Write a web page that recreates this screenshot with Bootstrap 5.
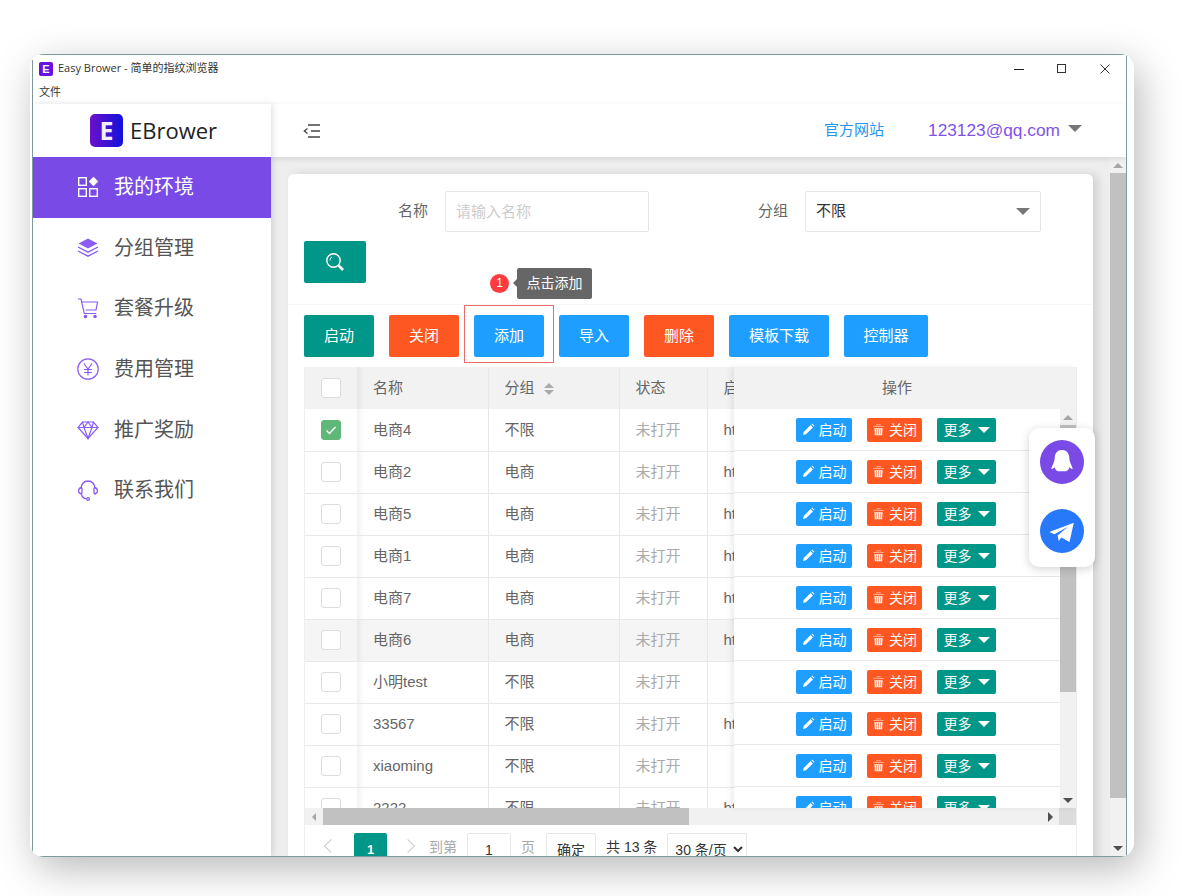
<!DOCTYPE html>
<html lang="zh-CN">
<head>
  <meta charset="UTF-8" />
  <meta name="viewport" content="width=device-width, initial-scale=1.0"/>
  <title>Easy Brower</title>
  <link href="https://cdn.jsdelivr.net/npm/bootstrap@5.3.0/dist/css/bootstrap.min.css" rel="stylesheet"/>
  <style>
    html, body { height: 100%; }
    body {
      background: #fff;
      font-family: "Liberation Sans", "Noto Sans CJK SC", sans-serif;
      font-size: 15px;
      color: #666;
      overflow: hidden;
    }

    .app-frame {
      margin: 54px 0 0 30px;
      width: 1104px;
      height: 803px;
      padding: 0 7px 0 2px;
      background: #fff;
      border-radius: 14px;
      box-shadow: 6px 12px 40px rgba(0, 0, 0, .28);
      overflow: hidden;
    }
    .app-window {
      position: relative;
      height: 100%;
      border: 1px solid #7f999e;
      background: #fff;
      overflow: hidden;
    }

    .title-bar { height: 27px; padding-left: 6px; }
    .title-logo {
      width: 14px; height: 14px; border-radius: 2px;
      background: #6a11e0; color: #fff;
      font-size: 11px; font-weight: 700; line-height: 14px; text-align: center;
    }
    .title-text { margin-left: 5px; font-family: "Open Sans", "Noto Sans CJK SC", sans-serif; font-size: 11px; color: #333; }
    .win-btn { width: 43px; height: 27px; }
    .menu-bar { height: 22px; padding-left: 6px; font-size: 11px; line-height: 21px; color: #333; }

    .app-body { height: 752px; }
    .side-nav { width: 238px; flex: none; background: #fff; box-shadow: 2px 0 6px rgba(0, 0, 0, .12); position: relative; z-index: 3; }
    .brand { height: 53px; padding-left: 57px; }
    .brand-logo {
      width: 33px; height: 33px; border-radius: 5px;
      background: linear-gradient(90deg, #6a11cb, #1212dc);
      color: #f3eefc; font-family: "Open Sans", sans-serif; font-size: 25px; font-weight: 700; line-height: 33px; text-align: center;
    }
    .brand-name { margin-left: 7px; font-family: "Open Sans", sans-serif; font-size: 22px; color: #222; }
    .side-item { height: 60.6px; padding-left: 44px; font-size: 20px; color: #555; }
    .side-item svg { width: 22px; height: 22px; margin-right: 15px; flex: none; color: #8a5cf2; }
    .side-item.is-active { background: #7a4ae6; color: #fff; }
    .side-item.is-active svg { color: #fff; }

    .main-area { width: 855px; flex: none; min-width: 0; }
    .top-bar { height: 53px; background: #fff; box-shadow: 0 2px 6px rgba(0, 0, 0, .1); padding-left: 32px; position: relative; z-index: 2; }
    .site-link { margin-left: 504px; color: #2196f3; font-size: 15px; }
    .user-mail { margin-left: 44px; color: #7f52ea; font-size: 17.3px; }
    .caret-down { display: inline-block; width: 0; height: 0; border-left: 7px solid transparent; border-right: 7px solid transparent; border-top: 7px solid #777; }
    .page-row { height: 699px; background: #eee; }
    .page-scroll { width: 839px; flex: none; padding: 17px 17px 0; overflow: hidden; }
    .main-card { width: 805px; height: 800px; background: #fff; border-radius: 6px 6px 0 0; box-shadow: 5px 0 10px rgba(0, 0, 0, .12); }

    .scroll-y { width: 16px; flex: none; background: #f1f1f1; }
    .page-scroll-bar { padding-top: 0; }
    .arrow-up, .arrow-down, .arrow-left, .arrow-right { width: 0; height: 0; display: block; }
    .arrow-up { border-left: 5px solid transparent; border-right: 5px solid transparent; border-bottom: 5px solid #a6a6a6; }
    .arrow-down { border-left: 5px solid transparent; border-right: 5px solid transparent; border-top: 5px solid #505050; }
    .arrow-left { border-top: 4px solid transparent; border-bottom: 4px solid transparent; border-right: 4px solid #a6a6a6; }
    .arrow-right { border-top: 5px solid transparent; border-bottom: 5px solid transparent; border-left: 5px solid #505050; }
    .scroll-btn { height: 16px; }
    .scroll-thumb { background: #c1c1c1; }

    .search-form { padding: 17px 16px 0; height: 131px; border-bottom: 1px solid #f6f6f6; }
    .field-label { text-align: right; margin-right: 17px; color: #666; }
    .field-input.form-control {
      height: 41px; border: 1px solid #e6e6e6; border-radius: 2px; padding: 0 10px;
      font-size: 15px; color: #333; box-shadow: none; background: #fff;
    }
    .field-input.form-control::placeholder { color: #ccc; }
    .btn-search { margin-top: 9px; width: 62px; height: 42px; padding: 0; display: flex; align-items: center; justify-content: center; }
    .btn.tone-teal { background: #009688; color: #fff; border: 0; border-radius: 2px; }
    .btn.tone-red { background: #ff5722; color: #fff; border: 0; border-radius: 2px; }
    .btn.tone-blue { background: #1e9fff; color: #fff; border: 0; border-radius: 2px; }

    .tool-row { padding: 10px 16px; gap: 15px; height: 62px; }
    .tool-btn { height: 42px; padding: 0; font-size: 15px; line-height: 42px; width: 70px; }
    .tool-btn.is-wide { width: 100px; }
    .tool-btn.is-mid { width: 84px; }
    .guide-wrap { position: relative; height: 42px; }
    .guide-box { position: absolute; left: -10px; right: -10px; top: -10px; bottom: -6px; border: 1px solid #ef6a6a; pointer-events: none; }
    .guide-dot {
      position: absolute; left: 16px; top: -41px; width: 19px; height: 19px; border-radius: 50%;
      background: #ff3b3f; color: #fff; font-size: 12px; line-height: 19px; text-align: center;
    }
    .guide-tip {
      position: absolute; left: 43px; top: -47px; width: 75px; height: 31px; border-radius: 2px;
      background: #666; color: #fff; font-size: 14px; line-height: 31px; text-align: center; white-space: nowrap;
    }
    .guide-tip::before {
      content: ""; position: absolute; left: -4px; top: 11px;
      border-top: 4px solid transparent; border-bottom: 4px solid transparent; border-right: 4px solid #666;
    }

    .grid-box { margin: 0 16px; width: 773px; border-left: 1px solid #eee; border-right: 1px solid #eee; }
    .grid-main { height: 441px; }
    .grid-left { width: 429px; flex: none; overflow: hidden; }
    .env-table.table { width: 600px; table-layout: fixed; margin: 0; border-color: #e6e6e6; color: #666; font-size: 15px; }
    .env-table.table > :not(caption) > * > * { height: 42px; padding: 0 16px; vertical-align: middle; white-space: nowrap; border-bottom: 1px solid #e8e8e8; border-right: 1px solid #e8e8e8; }
    .env-table.table > thead > tr > th { background: #f2f2f2; font-weight: 400; border-bottom: 0; border-right-color: #e8e8e8; }
    .env-table.table > :not(caption) > * > *:first-child { padding: 0 0 0 16px; background: #fff; border-right: 0; }
    .env-table.table > thead > tr > th:first-child { background: #f2f2f2; }
    .env-table.table > :not(caption) > * > *:nth-child(2) { background-image: linear-gradient(90deg, rgba(0, 0, 0, .05), rgba(0, 0, 0, 0) 7px); }
    .env-table .is-hover > td, .env-table.table > tbody > .is-hover > td:first-child, .ops-table .is-hover { background: #f5f5f5; }
    .state-off { color: #aaa; }
    .check-box { display: block; width: 20px; height: 20px; border: 1px solid #ddd; border-radius: 3px; background: #fff; }
    .check-box.is-on { background: #5fb878; border-color: #5fb878; }
    .check-box svg { display: block; width: 18px; height: 18px; }
    .sort-mark { display: inline-block; margin-left: 9px; vertical-align: middle; }
    .sort-mark i { display: block; width: 0; height: 0; border-left: 5px solid transparent; border-right: 5px solid transparent; }
    .sort-mark i:first-child { border-bottom: 5px solid #aaa; margin-bottom: 2px; }
    .sort-mark i:last-child { border-top: 5px solid #aaa; }

    .grid-right { width: 342px; flex: none; background: #fff; box-shadow: -3px 0 6px rgba(0, 0, 0, .07); position: relative; }
    .ops-head { height: 42px; padding-right: 16px; background: #f2f2f2; line-height: 42px; text-align: center; }
    .ops-body { height: 399px; }
    .ops-col { width: 326px; flex: none; overflow: hidden; }
    .ops-table { height: 42px; border-bottom: 1px solid #e8e8e8; padding-left: 62px; gap: 15px; }
    .op-btn { height: 24px; padding: 0; font-size: 14px; line-height: 24px; display: flex; align-items: center; justify-content: center; gap: 4px; }
    .op-btn svg { width: 13px; height: 13px; flex: none; }
    .op-start { width: 56px; }
    .op-stop { width: 55px; }
    .op-more { width: 59px; gap: 6px; }
    .op-more .caret-down { border-left-width: 6px; border-right-width: 6px; border-top-width: 6px; border-top-color: #fff; }
    .grid-scroll-y { width: 16px; background: #f1f1f1; }

    .scroll-x { height: 17px; background: #f1f1f1; }
    .scroll-x-btn { width: 17px; }
    .scroll-x-thumb { width: 366px; margin-left: 1px; background: #c1c1c1; }
    .scroll-corner { width: 17px; background: #dcdcdc; }

    .pager-row { height: 40px; padding: 8px 0 0 17px; font-size: 14px; color: #333; }
    .page-arrow { width: 10px; height: 10px; border-left: 1px solid #ccc; border-bottom: 1px solid #ccc; transform: rotate(45deg); }
    .page-arrow.is-next { transform: rotate(225deg); }
    .page-now { width: 33px; height: 33px; margin: 0 16px 0 18px; background: #009688; color: #fff; text-align: center; line-height: 33px; border-radius: 2px 2px 0 0; font-weight: 700; font-size: 13px; }
    .page-hint { color: #aaa; }
    .page-input { width: 44px; height: 33px; margin: 0 10px; border: 1px solid #e6e6e6; border-radius: 2px; background: #fff; text-align: center; line-height: 33px; color: #333; }
    .page-ok { width: 50px; height: 33px; margin: 0 10px 0 11px; border: 1px solid #e6e6e6; border-radius: 2px; text-align: center; line-height: 33px; }
    .page-size { width: 80px; height: 33px; margin-left: 10px; border: 1px solid #e6e6e6; border-radius: 2px; background: #fff; color: #333; font-size: 14px; padding: 0 0 0 3px; font-family: inherit; }

    .float-panel {
      position: absolute; left: 996px; top: 373px; width: 66px; height: 139px; z-index: 5;
      background: #fff; border-radius: 10px; box-shadow: 0 2px 10px rgba(0, 0, 0, .18);
      padding-top: 12px; gap: 25px;
    }
    .float-icon { width: 44px; height: 44px; display: block; }
  </style>
</head>
<body>

<svg width="0" height="0" class="d-none">
  <symbol id="i-pen" viewBox="0 0 13 13"><path d="M1 12l.7-3L8.6 2.1l2.3 2.3L4 11.3z M9.4 1.3l.8-.8 2.3 2.3-.8.8z" fill="#fff"/></symbol>
  <symbol id="i-bin" viewBox="0 0 13 13"><path d="M1 3h11v1H1z M4.500 1.300h4l1 1.300h-6z M2 5h9l-.7 7.500H2.700z M4.400 6v5.500 M6.500 6v5.500 M8.600 6v5.500" fill="#fff" stroke="#ff5722" stroke-width=".6"/></symbol>
</svg>

<div class="app-frame">
  <div class="app-window">

    <div class="title-bar d-flex align-items-center">
      <div class="title-logo">E</div>
      <div class="title-text">Easy Brower - 简单的指纹浏览器</div>
      <div class="ms-auto d-flex">
        <div class="win-btn d-flex align-items-center justify-content-center"><svg width="10" height="10" viewBox="0 0 10 10"><path d="M0 5.500h10" stroke="#222"/></svg></div>
        <div class="win-btn d-flex align-items-center justify-content-center"><svg width="10" height="10" viewBox="0 0 10 10"><rect x=".5" y=".5" width="8" height="8" fill="none" stroke="#333"/></svg></div>
        <div class="win-btn d-flex align-items-center justify-content-center"><svg width="10" height="10" viewBox="0 0 10 10"><path d="M.5.500l9 9M9.500.500l-9 9" stroke="#333"/></svg></div>
      </div>
    </div>
    <div class="menu-bar">文件</div>

    <div class="app-body d-flex">
      <div class="side-nav">
        <div class="brand d-flex align-items-center">
          <div class="brand-logo">E</div>
          <div class="brand-name">EBrower</div>
        </div>
        <div class="side-item is-active d-flex align-items-center">
          <svg viewBox="0 0 22 22" fill="none" stroke="currentColor" stroke-width="1.400"><rect x="1.700" y="1.700" width="7.600" height="7.600"/><rect x="1.700" y="12.700" width="7.600" height="7.600"/><rect x="12.700" y="12.700" width="7.600" height="7.600"/><path d="M16.500 .8l4.700 4.700-4.700 4.700-4.700-4.700z" fill="currentColor" stroke="none"/></svg>
          我的环境
        </div>
        <div class="side-item d-flex align-items-center">
          <svg viewBox="0 0 22 22" fill="none" stroke="currentColor" stroke-width="1.400"><path d="M11 1.500l9.500 5-9.500 5-9.500-5z" fill="currentColor" stroke="none"/><path d="M1 10l10 5.200L21 10M1 14l10 5.200L21 14"/></svg>
          分组管理
        </div>
        <div class="side-item d-flex align-items-center">
          <svg viewBox="0 0 22 22" fill="none" stroke="currentColor" stroke-width="1.200"><path d="M1 2h3l3.300 14.500h12"/><path d="M5 5h15.500l-1.500 8H8.500"/><circle cx="8.500" cy="19.500" r="1.200" fill="currentColor"/><circle cx="18" cy="19.500" r="1.200" fill="currentColor"/></svg>
          套餐升级
        </div>
        <div class="side-item d-flex align-items-center">
          <svg viewBox="0 0 22 22" fill="none" stroke="currentColor" stroke-width="1.200"><circle cx="11" cy="11" r="10.200"/><path d="M6.800 5.500L11 11l4.200-5.500M11 11v6.500M7 11.500h8M7 14.500h8"/></svg>
          费用管理
        </div>
        <div class="side-item d-flex align-items-center">
          <svg viewBox="0 0 22 22" fill="none" stroke="currentColor" stroke-width="1.200"><path d="M5.500 3h11l4.500 5.500L11 19.500 1 8.500z"/><path d="M1 8.500h20M7 8.500l4 11 4-11M5.500 3L7 8.500 11 3l4 5.500L16.500 3"/></svg>
          推广奖励
        </div>
        <div class="side-item d-flex align-items-center">
          <svg viewBox="0 0 22 22" fill="none" stroke="currentColor" stroke-width="1.300"><path d="M4 9.500C4.500 4.500 7.500 2 11 2s6.500 2.500 7 7.500"/><path d="M4.300 8.500C2.500 9 1.500 10.300 1.500 11.800s1 2.700 2.800 3.200c1 .3 1-6.800 0-6.500zM17.700 8.500c1.800.5 2.800 1.800 2.800 3.300s-1 2.700-2.800 3.200c-1 .3-1-6.800 0-6.500z"/><path d="M4.500 15.500c.5 2.500 2.500 4 5 4.300"/><circle cx="11" cy="20" r="1.300"/></svg>
          联系我们
        </div>
      </div>

      <div class="main-area">
        <div class="top-bar d-flex align-items-center">
          <svg width="17" height="14" viewBox="0 0 17 14" fill="none" stroke="#444" stroke-width="1.600"><path d="M5 1h12M8 7h9M5 13h12"/><path d="M4.500 4.500L1.300 7l3.200 2.500" stroke-width="1.300"/></svg>
          <span class="site-link">官方网站</span>
          <span class="user-mail">123123@qq.com</span>
          <span class="caret-down ms-2 mb-1"></span>
        </div>

        <div class="page-row d-flex">
          <div class="page-scroll">
            <div class="main-card">
              <div class="search-form">
                <div class="d-flex align-items-center">
                  <div class="field-label" style="width:124px">名称</div>
                  <input class="form-control field-input" style="width:204px" placeholder="请输入名称">
                  <div class="field-label" style="width:139px">分组</div>
                  <div class="form-control field-input d-flex align-items-center justify-content-between" style="width:236px">
                    <span>不限</span><span class="caret-down search-caret"></span>
                  </div>
                </div>
                <button class="btn tone-teal btn-search" type="button">
                  <svg width="20" height="20" viewBox="0 0 20 20" fill="none" stroke="#fff"><circle cx="8.500" cy="8.500" r="6.700" stroke-width="1.400"/><path d="M5 8.500c0-2 1-3 2-3.500" stroke-width="1"/><path d="M13.500 13.500l4.500 4.500" stroke-width="2.600"/></svg>
                </button>
              </div>

              <div class="tool-row d-flex">
                <button class="btn tone-teal tool-btn" type="button">启动</button>
                <button class="btn tone-red tool-btn" type="button">关闭</button>
                <div class="guide-wrap">
                  <button class="btn tone-blue tool-btn" type="button">添加</button>
                  <span class="guide-box"></span>
                  <span class="guide-dot">1</span>
                  <span class="guide-tip">点击添加</span>
                </div>
                <button class="btn tone-blue tool-btn" type="button">导入</button>
                <button class="btn tone-red tool-btn" type="button">删除</button>
                <button class="btn tone-blue tool-btn is-wide" type="button">模板下载</button>
                <button class="btn tone-blue tool-btn is-mid" type="button">控制器</button>
              </div>

              <div class="grid-box">
                <div class="grid-main d-flex">
                  <div class="grid-left">
                    <table class="table env-table">
                      <colgroup><col style="width:52px"><col style="width:131px"><col style="width:131px"><col style="width:88px"><col></colgroup>
                      <thead>
                        <tr>
                          <th><span class="check-box"></span></th>
                          <th>名称</th>
                          <th>分组<span class="sort-mark"><i></i><i></i></span></th>
                          <th>状态</th>
                          <th>启动地址</th>
                        </tr>
                      </thead>
                      <tbody id="envRows"></tbody>
                    </table>
                  </div>
                  <div class="grid-right">
                    <div class="ops-head">操作</div>
                    <div class="ops-body d-flex">
                      <div class="ops-col" id="opsRows"></div>
                      <div class="grid-scroll-y d-flex flex-column">
                        <div class="scroll-btn d-flex align-items-center justify-content-center"><span class="arrow-up"></span></div>
                        <div class="scroll-thumb" style="height:267px"></div>
                        <div class="scroll-btn d-flex align-items-center justify-content-center mt-auto"><span class="arrow-down"></span></div>
                      </div>
                    </div>
                  </div>
                </div>

                <div class="scroll-x d-flex">
                  <div class="scroll-x-btn d-flex align-items-center justify-content-center"><span class="arrow-left"></span></div>
                  <div class="scroll-x-thumb"></div>
                  <div class="scroll-x-btn ms-auto d-flex align-items-center justify-content-center"><span class="arrow-right"></span></div>
                  <div class="scroll-corner"></div>
                </div>

                <div class="pager-row d-flex align-items-start">
                  <span class="page-arrow mt-2 ms-1"></span>
                  <span class="page-now">1</span>
                  <span class="page-arrow is-next mt-2"></span>
                  <span class="page-hint ms-3 mt-1">到第</span>
                  <span class="page-input">1</span>
                  <span class="page-hint mt-1">页</span>
                  <span class="page-ok">确定</span>
                  <span class="mt-1">共 13 条</span>
                  <select class="page-size"><option>30 条/页</option></select>
                </div>
              </div>
            </div>
          </div>

          <div class="scroll-y page-scroll-bar d-flex flex-column">
            <div class="scroll-btn d-flex align-items-center justify-content-center"><span class="arrow-up"></span></div>
            <div class="scroll-thumb" style="height:625px"></div>
            <div class="scroll-btn d-flex align-items-center justify-content-center mt-auto"><span class="arrow-down"></span></div>
          </div>
        </div>
      </div>
    </div>

    <div class="float-panel d-flex flex-column align-items-center">
      <svg class="float-icon" viewBox="0 0 44 44">
        <circle cx="22" cy="22" r="22" fill="#7a4ae6"/>
        <path d="M22 10c-4.600 0-7.300 3.500-7.300 8 0 1.500-.3 3-1 4.800-.8 2-2 4.200-2.300 5.600-.1.900 1 .6 2.300-.4l1-.8c.2 1.200.8 2.200 1.500 3l1.800 1h8l1.800-1c.7-.8 1.300-1.800 1.500-3l1 .8c1.300 1 2.400 1.300 2.300.4-.3-1.400-1.500-3.600-2.300-5.600-.7-1.800-1-3.300-1-4.800 0-4.500-2.700-8-7.300-8z" fill="#fff"/>
      </svg>
      <svg class="float-icon" viewBox="0 0 44 44">
        <circle cx="22" cy="22" r="22" fill="#2878fa"/>
        <path d="M9.300 23L33.800 13.700 29.500 33 21.300 28.600 18.700 32 17.600 26.500 28 17.800 14.500 25.300z" fill="#fff"/>
      </svg>
    </div>

  </div>
</div>

<script src="https://cdn.jsdelivr.net/npm/bootstrap@5.3.0/dist/js/bootstrap.bundle.min.js"></script>
<script>
  const rows = [
    ["电商4", "不限", "https://", true],
    ["电商2", "电商", "https://"],
    ["电商5", "电商", "https://"],
    ["电商1", "电商", "https://"],
    ["电商7", "电商", "https://"],
    ["电商6", "电商", "https://", false, true],
    ["小明test", "不限", ""],
    ["33567", "不限", "https://"],
    ["xiaoming", "不限", ""],
    ["2222", "不限", "https://"]
  ];

  const tick = '<svg viewBox="0 0 18 18" fill="none" stroke="#fff" stroke-width="1.300"><path d="M4.500 9.500l3 3 6-6.500"/></svg>';

  document.getElementById("envRows").innerHTML = rows.map(r =>
    `<tr class="${r[4] ? "is-hover" : ""}">
      <td><span class="check-box ${r[3] ? "is-on" : ""}">${r[3] ? tick : ""}</span></td>
      <td>${r[0]}</td><td>${r[1]}</td><td class="state-off">未打开</td><td>${r[2]}</td>
    </tr>`).join("");

  document.getElementById("opsRows").innerHTML = rows.map(r =>
    `<div class="ops-table d-flex align-items-center ${r[4] ? "is-hover" : ""}">
      <button class="btn tone-blue op-btn op-start" type="button"><svg><use href="#i-pen"/></svg>启动</button>
      <button class="btn tone-red op-btn op-stop" type="button"><svg><use href="#i-bin"/></svg>关闭</button>
      <button class="btn tone-teal op-btn op-more" type="button">更多<span class="caret-down"></span></button>
    </div>`).join("");
</script>
</body>
</html>
